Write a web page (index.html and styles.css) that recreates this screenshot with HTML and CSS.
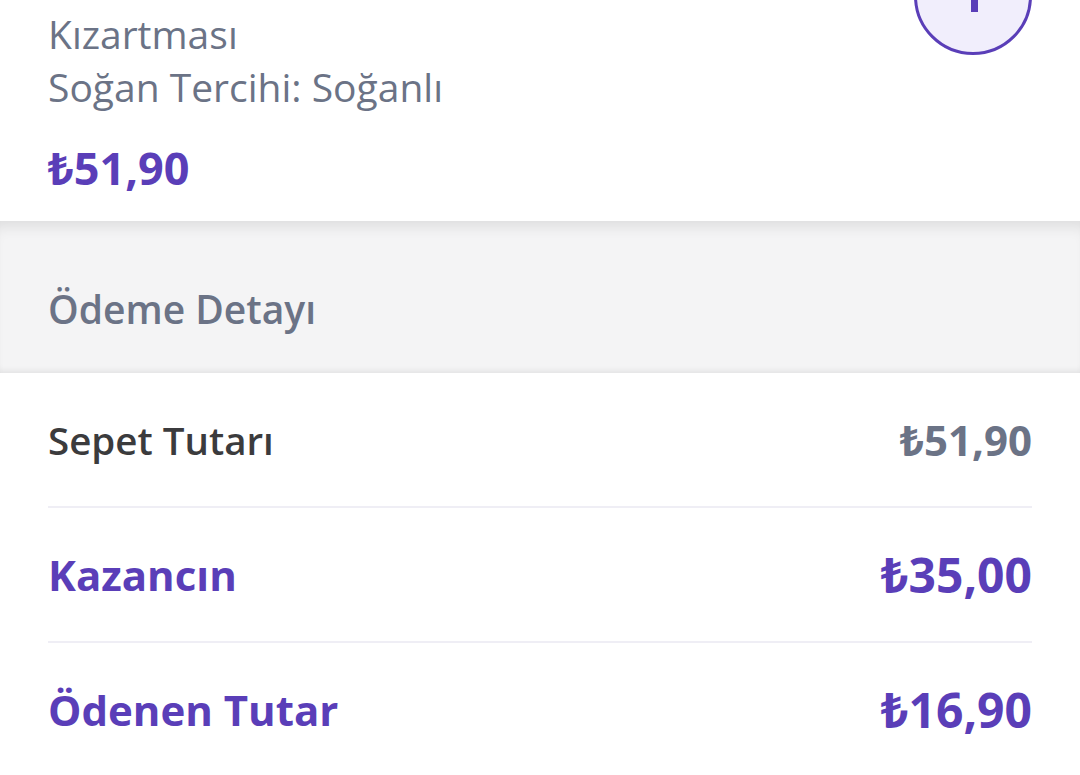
FILE: index.html
```html
<!DOCTYPE html>
<html lang="tr">
<head>
    <meta charset="UTF-8">
    <meta name="viewport" content="width=device-width, initial-scale=1.0">
    <title>Sepet</title>
    <link rel="stylesheet" href="styles.css">
</head>
<body>
    <div class="product">
        <div class="product-info">
            <p class="product-desc">Kızartması<br>Soğan Tercihi: Soğanlı</p>
            <p class="product-price">₺51,90</p>
        </div>
        <button class="add-btn" aria-label="Ekle"><span class="plus"></span></button>
    </div>

    <div class="section-head">
        <h2>Ödeme Detayı</h2>
    </div>

    <div class="summary">
        <div class="row">
            <span class="label">Sepet Tutarı</span>
            <span class="value">₺51,90</span>
        </div>
        <div class="row accent">
            <span class="label">Kazancın</span>
            <span class="value">₺35,00</span>
        </div>
        <div class="row accent">
            <span class="label">Ödenen Tutar</span>
            <span class="value">₺16,90</span>
        </div>
    </div>
</body>
</html>
```

FILE: styles.css
```css
body {
    font-family: "Open Sans", "Noto Sans", sans-serif;
    margin: 0;
    padding: 0;
    background-color: #fff;
    overflow: hidden;
}
p, h2 {
    margin: 0;
}
.product {
    display: flex;
    justify-content: space-between;
    align-items: flex-start;
    padding: 0 48px;
    height: 221px;
}
.product-desc {
    font-size: 39px;
    line-height: 53px;
    color: #6b7386;
    padding-top: 7px;
}
.product-price {
    font-size: 45px;
    font-weight: 700;
    color: #5a3eb8;
    margin-top: 24px;
}
.add-btn {
    width: 118px;
    height: 118px;
    margin-top: -63px;
    border-radius: 50%;
    border: 3px solid #5a3eb8;
    background: #f1eefc;
    position: relative;
    padding: 0;
}
.plus {
    display: block;
    position: absolute;
    left: 54px;
    top: 44px;
    width: 7px;
    height: 28px;
    background: #5a3eb8;
}
.section-head {
    background: #f4f4f5;
    height: 152px;
    padding: 0 48px;
    display: flex;
    align-items: center;
    box-shadow: inset 0 14px 14px -8px rgba(0, 0, 0, 0.09), inset 0 -6px 6px -4px rgba(0, 0, 0, 0.08);
}
.section-head h2 {
    font-size: 39px;
    font-weight: 600;
    color: #6b7386;
    padding-top: 22px;
}
.summary {
    padding: 0 48px;
}
.row {
    display: flex;
    justify-content: space-between;
    align-items: center;
    height: 133px;
    border-bottom: 2px solid #efeef5;
}
.row:last-child {
    border-bottom: none;
}
.label {
    font-size: 38.5px;
    font-weight: 600;
    color: #3b3b3d;
}
.value {
    font-size: 42px;
    font-weight: 700;
    color: #6b7386;
}
.row.accent .label {
    font-size: 42px;
    font-weight: 700;
    color: #5a3eb8;
}
.row.accent .value {
    font-size: 48px;
    color: #5a3eb8;
}
```
